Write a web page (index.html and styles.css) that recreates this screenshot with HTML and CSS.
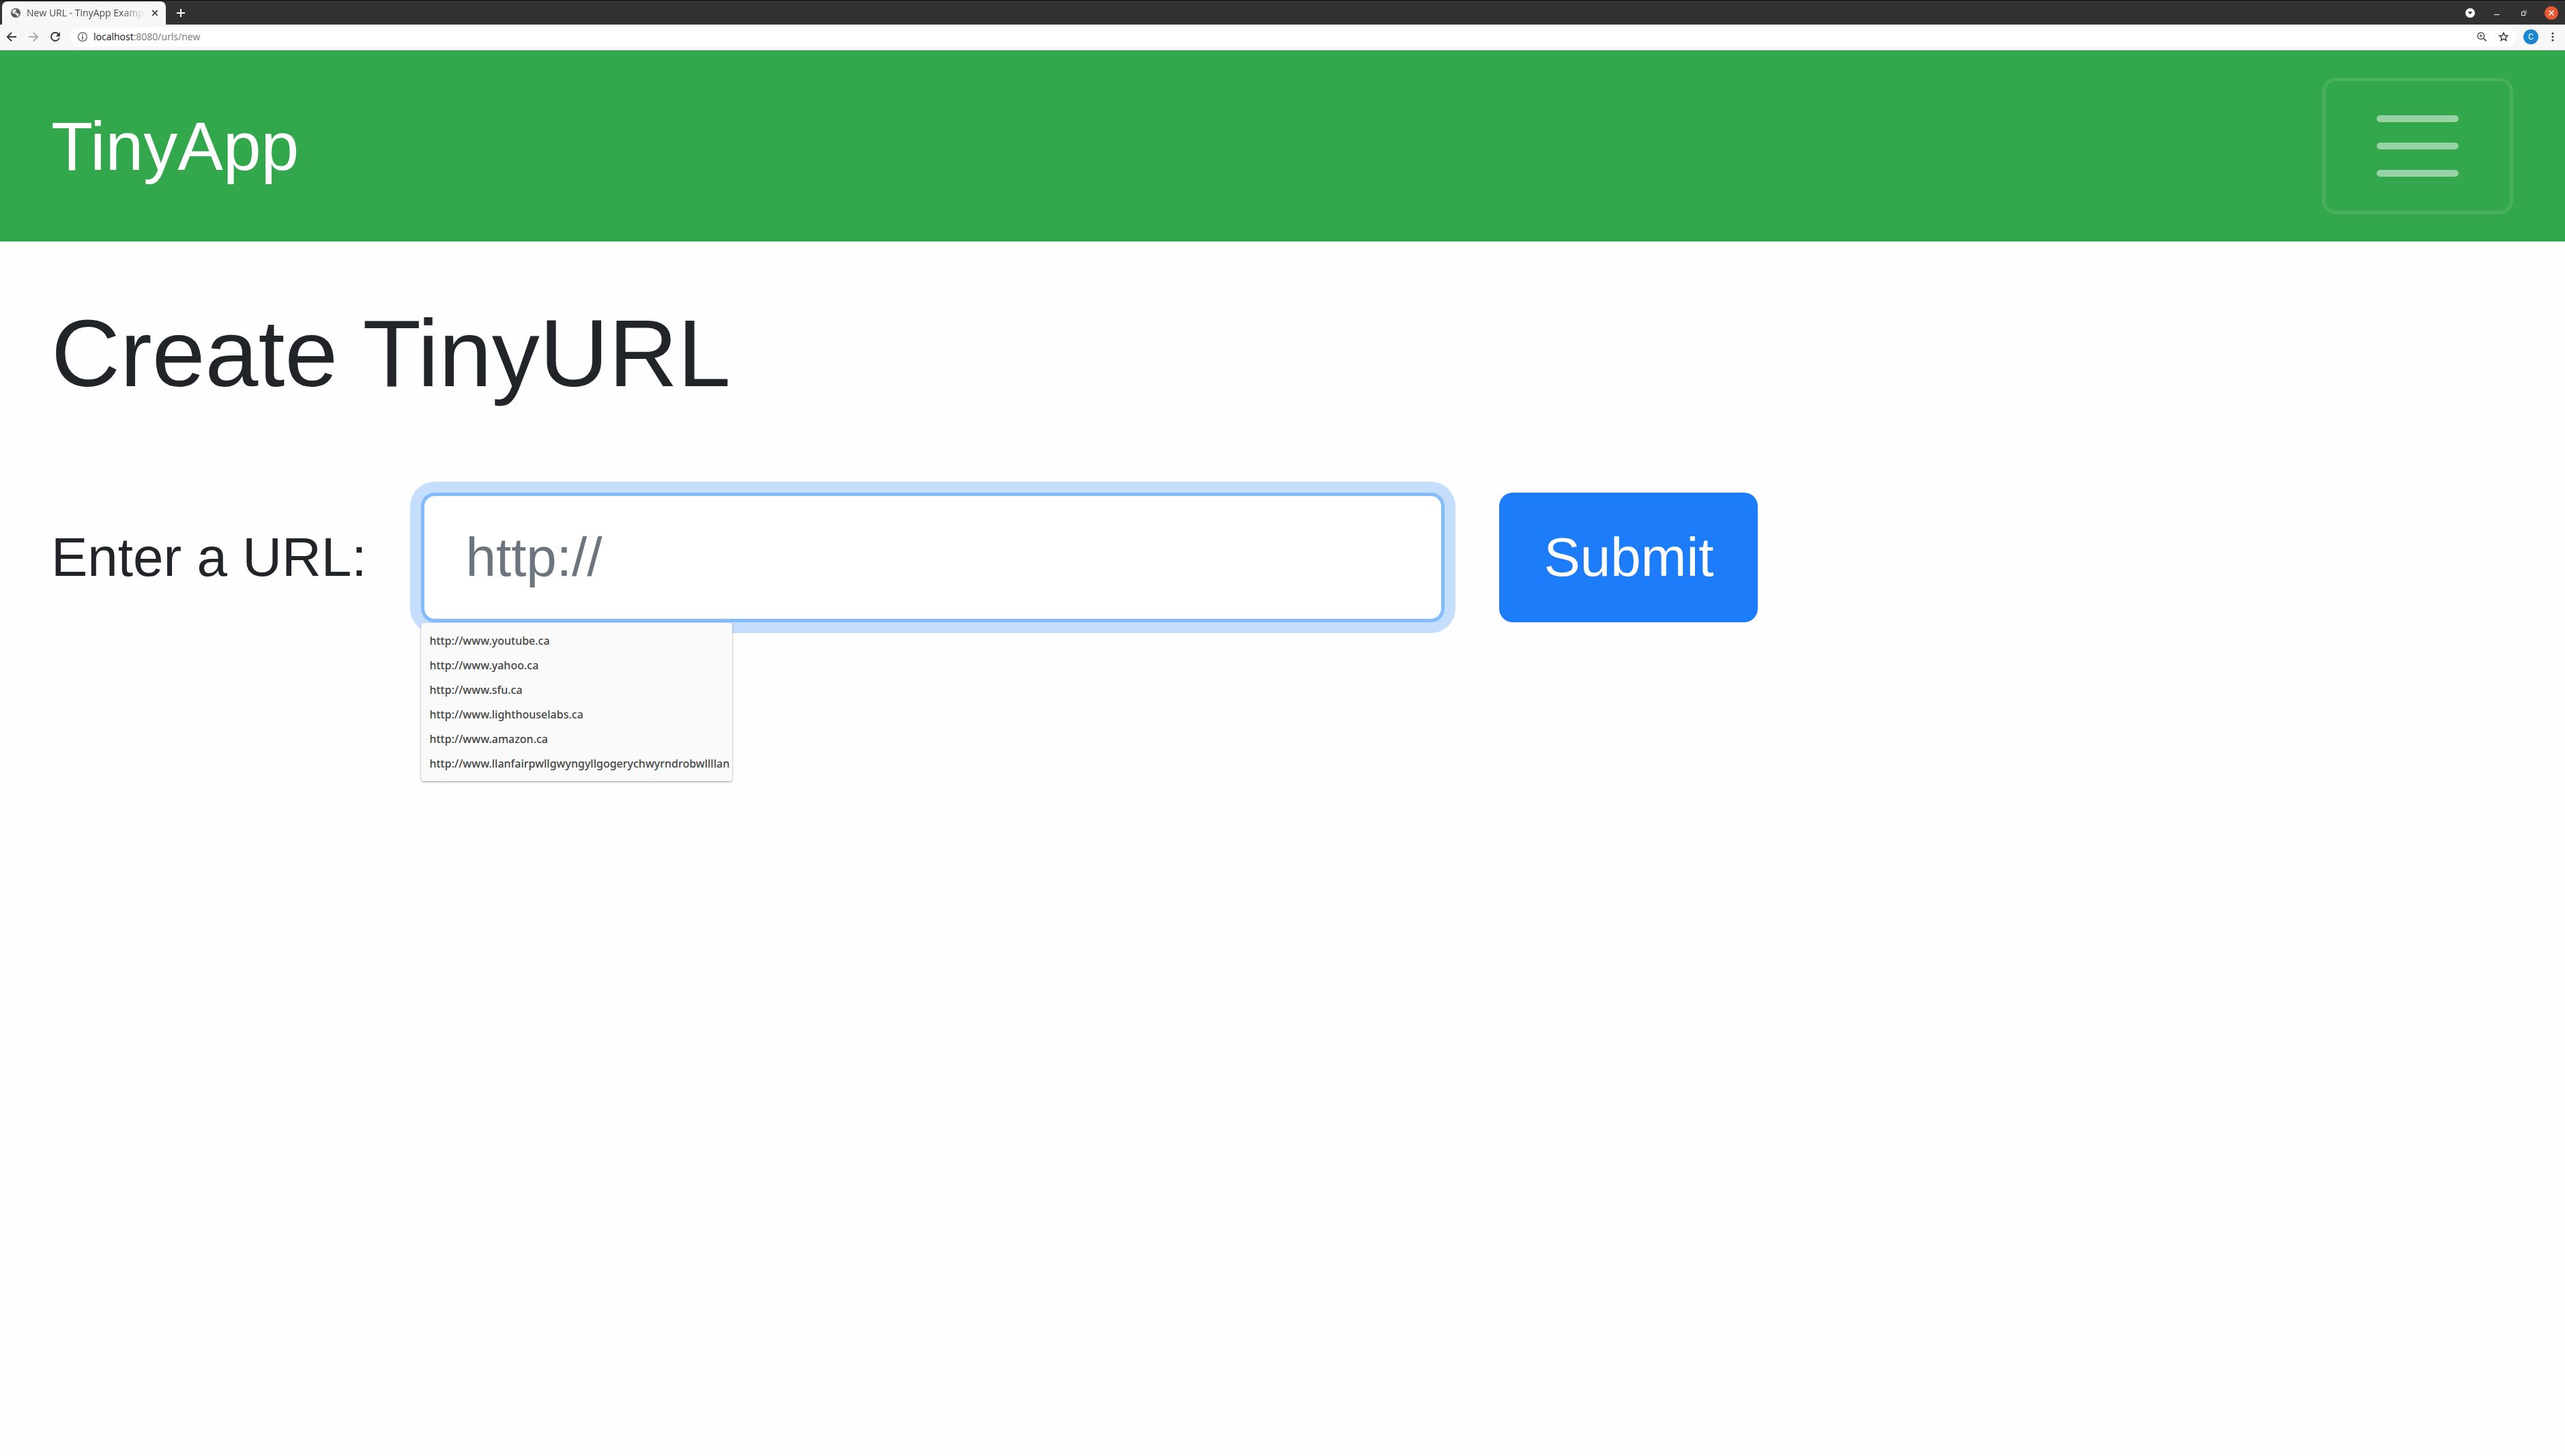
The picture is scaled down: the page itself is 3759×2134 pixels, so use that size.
FILE: index.html
```html
<!DOCTYPE html>
<html lang="en">
<head>
<meta charset="utf-8">
<title>New URL - TinyApp Example</title>
<link rel="stylesheet" href="styles.css">
</head>
<body>
<header class="browser">
  <div class="titlebar">
    <div class="tab">
      <svg class="icon16" viewBox="0 0 16 16" aria-hidden="true"><circle cx="8" cy="8" r="7" fill="#5a5f64"/><path d="M8.500 2.500C8 4 9.500 4.500 8.500 5.500S6 6 6.500 7.500H9.500C10.500 8 10 9 11.500 9.500L13 8.500C13 11 11.500 12.800 9.500 13.300L10 11 8 10.500 7.500 9H5L2.800 7C3 4.500 5 2.500 8.500 2.500Z" fill="#f7f7f7"/></svg>
      <span class="tab-title">New URL - TinyApp Examp</span>
      <button class="tab-close" aria-label="Close tab"><svg class="icon16" viewBox="0 0 16 16"><path d="M4.200 4.200 11.800 11.800M11.800 4.200 4.200 11.800" stroke="#3c4043" stroke-width="1.700"/></svg></button>
    </div>
    <button class="chrome-btn" aria-label="New tab"><svg class="icon16" viewBox="0 0 16 16"><path d="M8 2V14M2 8H14" stroke="#fff" stroke-width="2"/></svg></button>
    <div class="window-controls">
      <button class="win-btn" aria-label="Search tabs"><svg class="icon20" viewBox="0 0 20 20"><circle cx="11" cy="10" r="7" fill="#f7f7f7"/><path d="M8 8H14L11 12.500Z" fill="#333132"/></svg></button>
      <button class="win-btn" aria-label="Minimize"><svg class="icon20" viewBox="0 0 20 20"><path d="M6 12.500H14" stroke="#fff"/></svg></button>
      <button class="win-btn" aria-label="Restore"><svg class="icon20" viewBox="0 0 20 20"><path d="M8.500 6.500H13.500V11.500" fill="none" stroke="#99989a"/><path d="M6.500 8.500H11.500V13.500H6.500Z" fill="none" stroke="#fff"/></svg></button>
      <button class="win-btn" aria-label="Close"><svg class="icon20" viewBox="0 0 20 20"><circle cx="10" cy="10" r="10" fill="#e95a32"/><path d="M6.500 6.500 13.500 13.500M13.500 6.500 6.500 13.500" stroke="#fff" stroke-width="1.500"/></svg></button>
    </div>
  </div>
  <div class="toolbar">
    <button class="chrome-btn" aria-label="Back"><svg class="icon16" viewBox="0 0 16 16"><path d="M15 8H2.500M8 1.800 1.800 8 8 14.200" fill="none" stroke="#3c4043" stroke-width="2"/></svg></button>
    <button class="chrome-btn" aria-label="Forward"><svg class="icon16" viewBox="0 0 16 16"><path d="M1 8H13.500M8 1.800 14.200 8 8 14.200" fill="none" stroke="#acacac" stroke-width="2"/></svg></button>
    <button class="chrome-btn" aria-label="Reload"><svg class="icon16" viewBox="0 0 16 16"><path d="M12.800 4.200A6 6 0 1 0 13.800 9.500" fill="none" stroke="#3c4043" stroke-width="2"/><path d="M15 1V7.500H8.500Z" fill="#3c4043"/></svg></button>
    <div class="address">
      <svg class="icon16" viewBox="0 0 16 16" aria-hidden="true"><circle cx="8" cy="8" r="6.400" fill="none" stroke="#5a5f64" stroke-width="1.300"/><path d="M8 7V12M8 4V5.700" stroke="#5a5f64" stroke-width="1.700"/></svg>
      <div class="url" role="textbox" aria-label="Address">localhost<span class="url-path">:8080/urls/new</span></div>
      <button class="chrome-btn" aria-label="Zoom"><svg class="icon16" viewBox="0 0 16 16"><circle cx="6.800" cy="6.500" r="4.800" fill="none" stroke="#4c5054" stroke-width="1.400"/><path d="M10.200 9.900 14.500 14.200" stroke="#4c5054" stroke-width="1.900"/><path d="M6.800 4.200V8.800M4.500 6.500H9.100" stroke="#4c5054" stroke-width="1.200"/></svg></button>
      <button class="chrome-btn" aria-label="Bookmark"><svg class="icon16" viewBox="0 0 16 16"><path d="M8 2 9.800 6 14.100 6.400 10.800 9.200 11.800 13.500 8 11.200 4.200 13.500 5.200 9.200 1.900 6.400 6.200 6Z" fill="none" stroke="#3c4043" stroke-width="1.500"/></svg></button>
    </div>
    <button class="chrome-btn" aria-label="Profile"><span class="avatar">C</span></button>
    <button class="chrome-btn" aria-label="Menu"><svg class="icon16" viewBox="0 0 16 16"><g fill="#3c4043"><circle cx="8" cy="3" r="1.600"/><circle cx="8" cy="8" r="1.600"/><circle cx="8" cy="13" r="1.600"/></g></svg></button>
  </div>
</header>
<nav class="navbar">
  <a class="brand" href="#">TinyApp</a>
  <button class="toggler" aria-label="Toggle navigation"><svg class="toggler-icon" viewBox="0 0 30 30"><path d="M4 7H26M4 15H26M4 23H26" stroke="#fff" stroke-opacity=".5" stroke-width="2" stroke-linecap="round"/></svg></button>
</nav>
<main class="content">
  <h1 class="heading">Create TinyURL</h1>
  <form class="url-form">
    <label for="longURL">Enter a URL:</label>
    <div class="field">
      <input class="url-input" id="longURL" name="longURL" type="text" placeholder="http://" autocomplete="off">
      <ul class="suggestions">
        <li>http://www.youtube.ca</li>
        <li>http://www.yahoo.ca</li>
        <li>http://www.sfu.ca</li>
        <li>http://www.lighthouselabs.ca</li>
        <li>http://www.amazon.ca</li>
        <li>http://www.llanfairpwllgwyngyllgogerychwyrndrobwllllan</li>
      </ul>
    </div>
    <button class="submit" type="submit">Submit</button>
  </form>
</main>
</body>
</html>
```
FILE: styles.css
```css
* { box-sizing: border-box; }
body {
  min-height: 100vh;
  margin: 0;
  background: #fefefe;
  color: #212529;
  font: 80px/120px "Liberation Sans", Arial, sans-serif;
}
button {
  margin: 0;
  padding: 0;
  border: 0;
  background: none;
  font: inherit;
}
svg { display: block; }

/* Browser chrome */
.browser {
  font: 14px/20px "Open Sans", sans-serif;
  background: #f7f7f7;
  border-bottom: 1px solid #c4c4c4;
}
.titlebar {
  display: flex;
  height: 36px;
  padding: 2px 0 0 3px;
  background: #333132;
  box-shadow: inset 0 2px #1f1b1d, inset 0 3px #444243;
}
.tab {
  display: flex;
  align-items: center;
  width: 240px;
  padding: 0 8px 0 12px;
  border-radius: 8px 8px 0 0;
  background: #f7f7f7;
}
.tab-title {
  flex: 1;
  margin-left: 8px;
  white-space: nowrap;
  color: #45484b;
  mask-image: linear-gradient(to right, #000 80%, transparent);
}
.tab-close { margin-left: 6px; }
.icon16 { width: 16px; height: 16px; }
.icon20 { width: 20px; height: 20px; }
.chrome-btn {
  display: flex;
  align-items: center;
  justify-content: center;
  flex: none;
  width: 32px;
}
.titlebar .chrome-btn { margin-left: 6px; }
.window-controls {
  display: flex;
  margin-left: auto;
}
.win-btn {
  display: flex;
  align-items: center;
  justify-content: center;
  width: 40px;
}
.toolbar {
  display: flex;
  align-items: stretch;
  padding: 4px 2px 5px 1px;
}
.address {
  flex: 1;
  display: flex;
  align-items: center;
  height: 28px;
  margin: 0 6px;
  padding: 0 2px 0 10px;
  border-radius: 14px;
  background: #fff;
}
.url {
  flex: 1;
  margin-left: 8px;
  color: #111;
}
.url-path { color: #75787b; }
.avatar {
  width: 22px;
  border-radius: 11px;
  background: #1b87d0;
  color: #fff;
  font: 12px/22px Roboto, sans-serif;
  text-align: center;
}

/* Page */
.navbar {
  display: flex;
  align-items: center;
  justify-content: space-between;
  padding: 40px 76px 40px 75px;
  background: #32a74b;
}
.brand {
  color: #fff;
  font-size: 100px;
  line-height: 150px;
  text-decoration: none;
}
.toggler {
  padding: 20px 60px;
  border: 5px solid rgba(255, 255, 255, .1);
  border-radius: 20px;
}
.toggler-icon {
  width: 150px;
  height: 150px;
}
.content { padding: 80px 75px; }
.heading {
  margin: 0 0 120px;
  font-size: 140px;
  font-weight: 400;
  line-height: 168px;
}
.url-form {
  display: flex;
  align-items: center;
  gap: 80px;
}
.field { position: relative; }
.url-input {
  display: block;
  width: 1500px;
  height: 190px;
  padding: 30px 60px;
  border: 5px solid #83bcfd;
  border-radius: 20px;
  outline: 0;
  background: #fff;
  box-shadow: 0 0 0 16px #c5defe;
  color: #495057;
  font: inherit;
}
.url-input::placeholder {
  color: #6c757d;
  opacity: 1;
}
.suggestions {
  position: absolute;
  top: 100%;
  left: 0;
  width: 456px;
  margin: 1px 0 0;
  padding: 8px 12px;
  border-radius: 4px;
  background: #fafafa;
  box-shadow: 0 1px 3px rgba(0, 0, 0, .4);
  color: #444;
  font: 500 16px/36px "Noto Sans", sans-serif;
  list-style: none;
}
.suggestions li { white-space: nowrap; }
.submit {
  padding: 35px 65px;
  border-radius: 20px;
  background: #1c7cfa;
  color: #fff;
}
```
